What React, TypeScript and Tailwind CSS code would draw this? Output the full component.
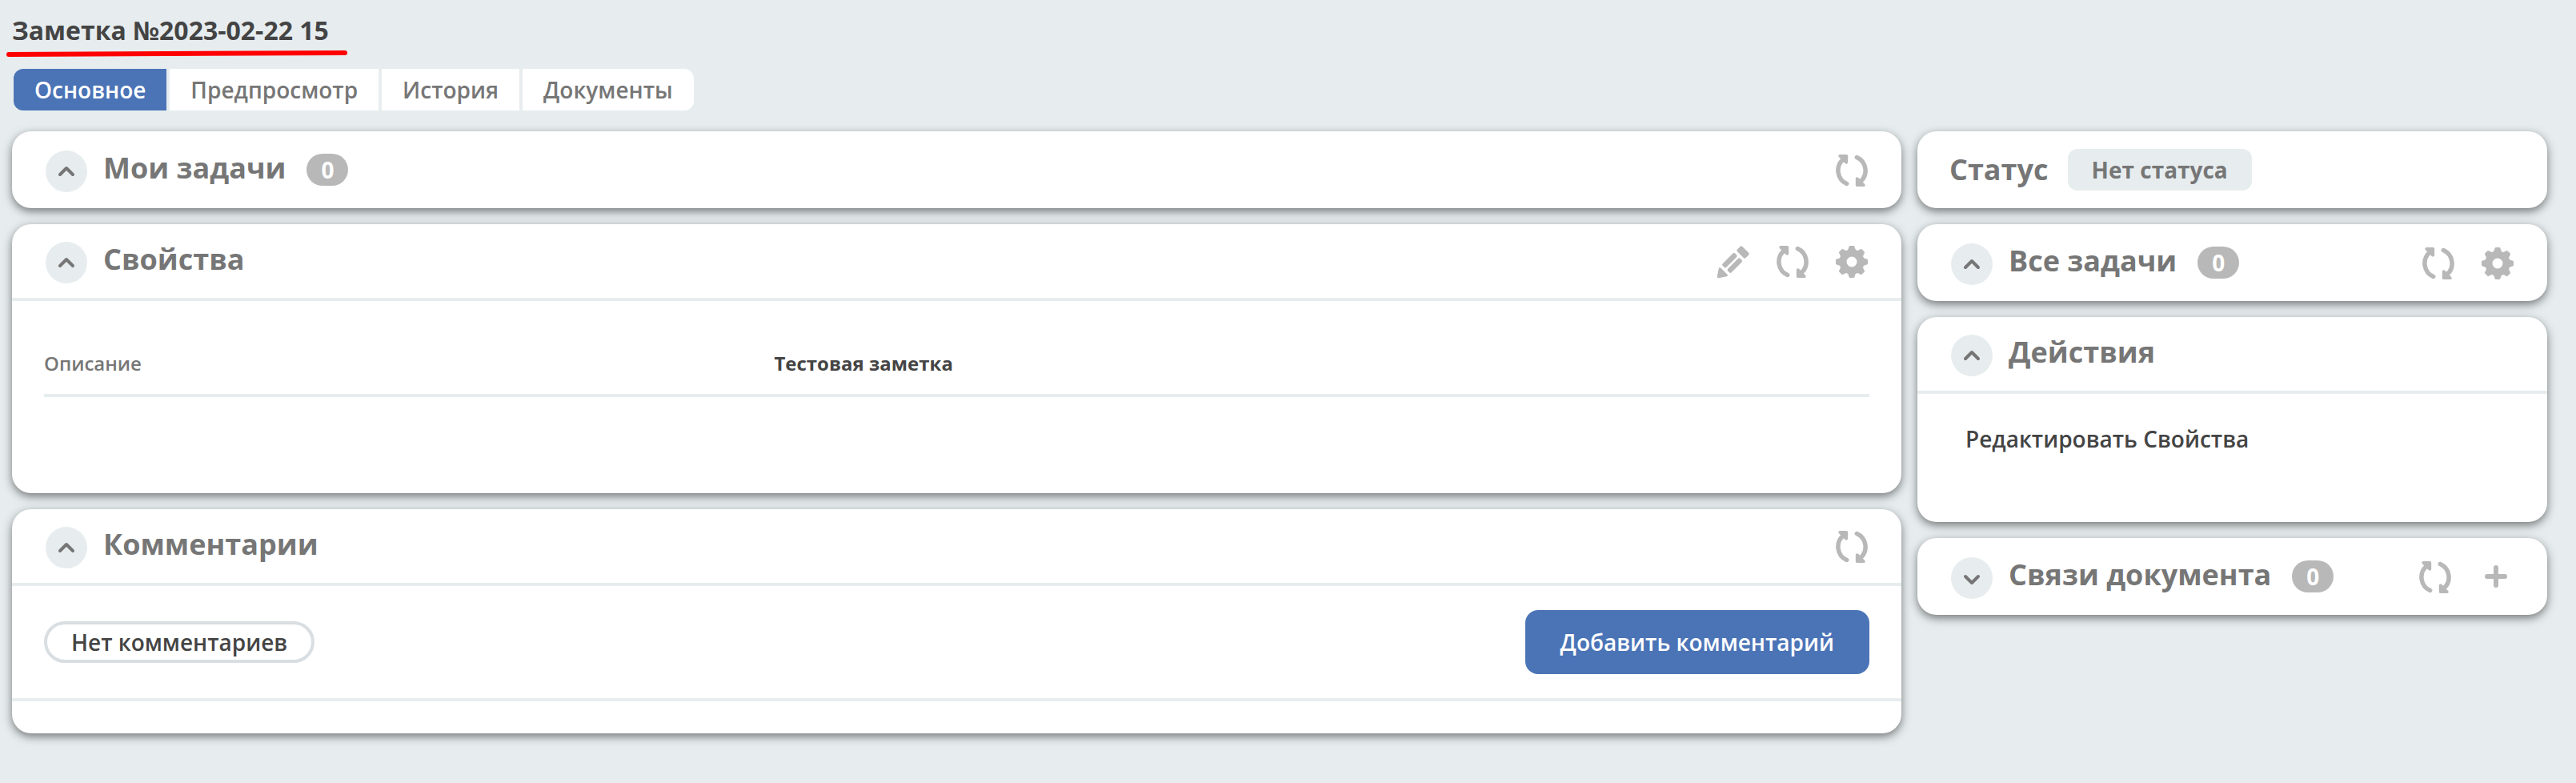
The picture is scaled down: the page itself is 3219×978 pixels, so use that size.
import type { ReactNode } from "react";

function RefreshArrow() {
  return (
    <>
      <path d="M13.700 36.500A18.200 18.200 0 0 1 8.800 6.500" stroke="currentColor" strokeWidth="5.500" strokeLinecap="round" />
      <path d="M5 0h8.500q1.700 0 1.700 1.700v8.600q-1.300 2.400-3.500.8L3.800 3Q2.400.5 5 0z" fill="currentColor" />
    </>
  );
}

function RefreshIcon() {
  return (
    <svg viewBox="0 0 40 40" className="h-10 w-10" fill="none" aria-hidden="true">
      <RefreshArrow />
      <g transform="rotate(180 20 20)">
        <RefreshArrow />
      </g>
    </svg>
  );
}

const TOOTH_ANGLES = [0, 45, 90, 135, 180, 225, 270, 315];

function GearIcon() {
  return (
    <svg viewBox="0 0 40 40" className="h-10 w-10" aria-hidden="true">
      <circle cx="20" cy="20" r="11" fill="none" stroke="currentColor" strokeWidth="9" />
      {TOOTH_ANGLES.map((angle) => (
        <path
          key={angle}
          transform={`rotate(${angle} 20 20)`}
          d="M13.500 7Q16 4.500 16.500 1.200Q16.700 0 18 0h4Q23.300 0 23.500 1.200Q24 4.500 26.500 7z"
          fill="currentColor"
        />
      ))}
    </svg>
  );
}

function PencilIcon() {
  return (
    <svg viewBox="0 0 40 40" className="h-10 w-10 overflow-visible" fill="currentColor" aria-hidden="true">
      <g transform="rotate(45 20 20)">
        <rect x="12.500" y="-1.500" width="15" height="9" rx="2" />
        <rect x="12.200" y="11" width="6.500" height="22" rx="2" />
        <rect x="21.300" y="11" width="6.500" height="22" rx="2" />
        <path d="M14.500 36.500h11q2.500 0 1.500 2.200L21.500 47q-1.500 2.200-3 0L13 38.700q-1-2.200 1.500-2.200z" />
      </g>
    </svg>
  );
}

function PlusIcon() {
  return (
    <svg viewBox="0 0 44 40" className="h-10 w-11" fill="none" aria-hidden="true">
      <path d="M22 8v22M11 19h22" stroke="currentColor" strokeWidth="6" strokeLinecap="round" />
    </svg>
  );
}

function Chevron({ down }: { down?: boolean }) {
  return (
    <svg viewBox="0 0 52 52" className="h-13 w-13" fill="none" aria-hidden="true">
      <path
        d={down ? "M18 24l8 8 8-8" : "M18 30l8-8 8 8"}
        stroke="currentColor"
        strokeWidth="4"
        strokeLinecap="round"
        strokeLinejoin="round"
      />
    </svg>
  );
}

function IconButton({ label, children }: { label: string; children: ReactNode }) {
  return (
    <button type="button" aria-label={label} className="text-[#b8b8b8]">
      {children}
    </button>
  );
}

const refresh = (
  <IconButton label="Обновить">
    <RefreshIcon />
  </IconButton>
);
const settings = (
  <IconButton label="Настройки">
    <GearIcon />
  </IconButton>
);

interface CardProps {
  title: string;
  count?: number;
  collapsed?: boolean;
  actions?: ReactNode;
  children?: ReactNode;
}

const cardClass = "overflow-hidden rounded-3xl bg-white shadow-[0_4px_12px_rgba(0,0,0,0.5)]";

function Card({ title, count, collapsed, actions, children }: CardProps) {
  return (
    <section className={cardClass}>
      <header className={children ? "border-b-4 border-[#e7edef] pt-[22px] pb-[18px]" : "pt-6 pb-5"}>
        <div className="flex items-center px-[42px]">
          <button
            type="button"
            aria-label={title}
            aria-expanded={!collapsed}
            className="rounded-full bg-[#e7edef] text-[#767676]"
          >
            <Chevron down={collapsed} />
          </button>
          <h2 className="-mt-2 ml-5 text-[36px] leading-[48px] font-bold text-[#767676]">{title}</h2>
          {count !== undefined && (
            <span className="-mt-1 ml-[26px] flex h-10 w-13 items-center justify-center rounded-full bg-[#b8b8b8] text-[28px] font-bold text-white">
              {count}
            </span>
          )}
          <div className="-mt-0.5 ml-auto flex gap-[34px]">{actions}</div>
        </div>
      </header>
      {children}
    </section>
  );
}

const TABS = ["Основное", "Предпросмотр", "История", "Документы"];

export default function App() {
  return (
    <main className="min-h-screen bg-[#e7edef] pr-9 pb-10 pl-[15px] font-['Open_Sans','Noto_Sans',sans-serif] text-[#444]">
      <div className="relative flex h-[86px] items-start pt-4">
        <h1 className="text-[32px] leading-[44px] font-bold">Заметка №2023-02-22 15</h1>
        <svg viewBox="0 0 428 12" className="absolute top-[61px] -left-2 h-3 w-[428px]" fill="none" aria-hidden="true">
          <path d="M4 7L424 5" stroke="#ff0000" strokeWidth="6" strokeLinecap="round" />
        </svg>
      </div>
      <nav className="ml-0.5 flex gap-1 text-[28px] leading-[52px] font-semibold">
        {TABS.map((tab, index) => (
          <button
            key={tab}
            type="button"
            aria-current={index === 0 ? "page" : undefined}
            className={
              index === 0
                ? "rounded-l-xl bg-[#4b74b7] px-[26px] text-white"
                : "bg-white px-[26px] text-[#767676] last:rounded-r-xl"
            }
          >
            {tab}
          </button>
        ))}
      </nav>
      <div className="mt-[26px] grid grid-cols-[3fr_1fr] items-start gap-5">
        <div className="flex flex-col gap-5">
          <Card title="Мои задачи" count={0} actions={refresh} />
          <Card
            title="Свойства"
            actions={
              <>
                <IconButton label="Редактировать">
                  <PencilIcon />
                </IconButton>
                {refresh}
                {settings}
              </>
            }
          >
            <div className="px-10 pt-10 pb-[120px]">
              <table className="w-full table-fixed border-separate border-spacing-0 text-left text-[24px] leading-9">
                <tbody>
                  <tr>
                    <th className="w-2/5 border-b-4 border-[#e7edef] py-5 font-semibold text-[#767676]">Описание</th>
                    <td className="border-b-4 border-[#e7edef] py-5 font-bold">Тестовая заметка</td>
                  </tr>
                </tbody>
              </table>
            </div>
          </Card>
          <Card title="Комментарии" actions={refresh}>
            <div className="flex items-center justify-between border-b-4 border-[#e7edef] px-10 py-[30px] text-[28px]">
              <span className="rounded-full border-4 border-[#d8dee2] px-[30px] leading-[44px] font-semibold">
                Нет комментариев
              </span>
              <button type="button" className="rounded-2xl bg-[#4b74b7] px-11 leading-[80px] font-semibold text-white">
                Добавить комментарий
              </button>
            </div>
            <div className="h-10" />
          </Card>
        </div>
        <aside className="flex flex-col gap-5">
          <section className={cardClass}>
            <div className="flex items-center gap-6 px-10 py-[22px]">
              <h2 className="text-[36px] leading-[52px] font-bold text-[#767676]">Статус</h2>
              <span className="rounded-xl bg-[#e7edef] px-[30px] text-[28px] leading-[52px] font-bold text-[#767676]">
                Нет статуса
              </span>
            </div>
          </section>
          <Card
            title="Все задачи"
            count={0}
            actions={
              <>
                {refresh}
                {settings}
              </>
            }
          />
          <Card title="Действия">
            <div className="px-[60px] pt-9 pb-[84px] text-[28px] leading-10 font-semibold">
              <a href="#edit">Редактировать Свойства</a>
            </div>
          </Card>
          <Card
            title="Связи документа"
            count={0}
            collapsed
            actions={
              <>
                {refresh}
                <IconButton label="Добавить">
                  <PlusIcon />
                </IconButton>
              </>
            }
          />
        </aside>
      </div>
    </main>
  );
}
